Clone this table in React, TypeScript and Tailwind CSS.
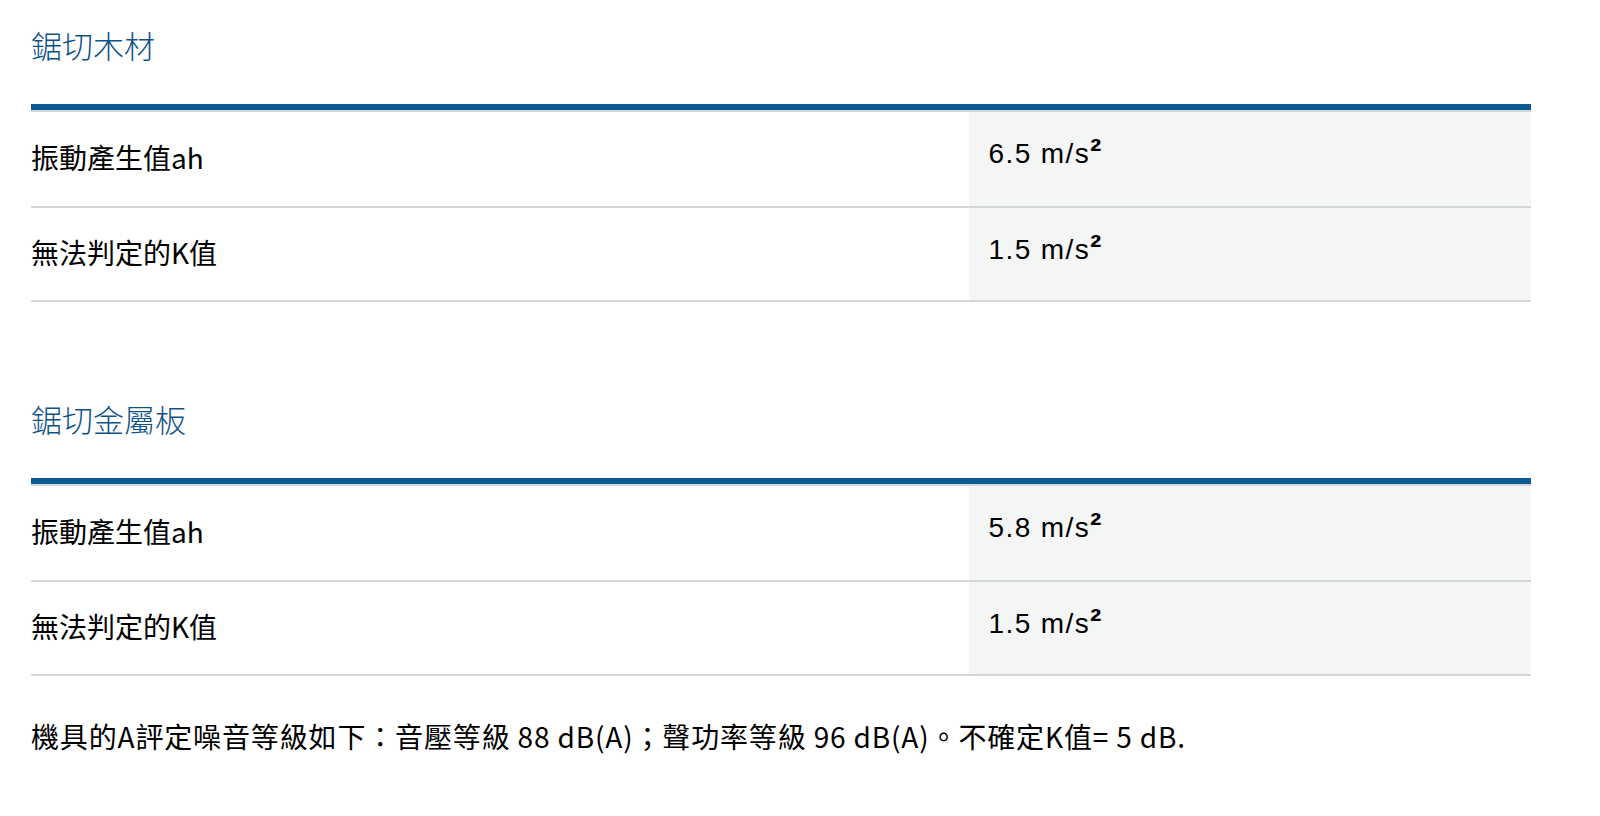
import React from "react";

type Row = { label: string; num: string; h: string };

const sections: { title: string; rows: Row[] }[] = [
  {
    title: "鋸切木材",
    rows: [
      { label: "振動產生值ah", num: "6.5", h: "h-[94px]" },
      { label: "無法判定的K值", num: "1.5", h: "h-[92px]" },
    ],
  },
  {
    title: "鋸切金屬板",
    rows: [
      { label: "振動產生值ah", num: "5.8", h: "h-[94px]" },
      { label: "無法判定的K值", num: "1.5", h: "h-[92px]" },
    ],
  },
];

const cjk = "font-['Noto_Sans_CJK_TC','Noto_Sans_CJK_SC',sans-serif]";

function Section({ title, rows, first }: { title: string; rows: Row[]; first: boolean }) {
  return (
    <section className={first ? "pt-[23px]" : "pt-[95px]"}>
      <h2 className={`${cjk} text-[31px] leading-[44px] font-light text-[#0f5189]`}>{title}</h2>
      <div className="mt-[37px] w-[1500px]">
        <div className="h-[6px] bg-[#0c5a92]" />
        <div className="border-t-2 border-[#d4d7da]">
          {rows.map((r, i) => (
            <div key={i} className="flex border-b-2 border-[#d4d7da]">
              <div className={`${r.h} w-[62.5%] flex items-center pb-[5px] ${cjk} text-[28px] text-black`}>
                {r.label}
              </div>
              <div className={`${r.h} flex-1 bg-[#f4f5f5] pl-[20px] pt-[24px] font-['Liberation_Sans',Arial,sans-serif] text-[28px] leading-[36px] tracking-[1.4px] text-black`}>
                {r.num} m/s
                <span className="text-[34px] leading-[0] font-semibold">²</span>
              </div>
            </div>
          ))}
        </div>
      </div>
    </section>
  );
}

export default function App() {
  return (
    <div className="min-h-screen bg-white pl-[31px]">
      {sections.map((s, i) => (
        <Section key={i} title={s.title} rows={s.rows} first={i === 0} />
      ))}
      <p className={`mt-[39px] ${cjk} text-[28px] leading-[42px] tracking-[0.85px] text-black`}>
        機具的A評定噪音等級如下：音壓等級 88 dB(A)；聲功率等級 96 dB(A)。不確定K值= 5 dB.
      </p>
    </div>
  );
}
